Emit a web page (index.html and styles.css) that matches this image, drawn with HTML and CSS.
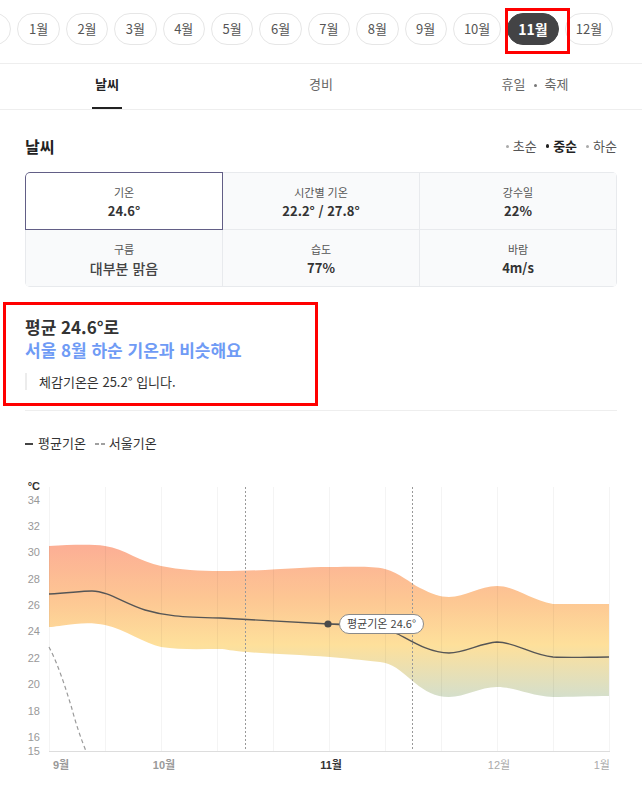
FILE: index.html
```html
<!DOCTYPE html>
<html lang="ko">
<head>
<meta charset="utf-8">
<title>날씨</title>
<link rel="stylesheet" href="styles.css">
</head>
<body>
<div class="months">
  <div class="months-track">
    <span class="pill">12월</span>
    <span class="pill">1월</span>
    <span class="pill">2월</span>
    <span class="pill">3월</span>
    <span class="pill">4월</span>
    <span class="pill">5월</span>
    <span class="pill">6월</span>
    <span class="pill">7월</span>
    <span class="pill">8월</span>
    <span class="pill">9월</span>
    <span class="pill">10월</span>
    <span class="pill active">11월</span>
    <span class="pill">12월</span>
  </div>
</div>

<nav class="tabs">
  <div class="tab"><span class="tab-label active">날씨</span></div>
  <div class="tab"><span class="tab-label">경비</span></div>
  <div class="tab"><span class="tab-label">휴일<i class="sep"></i>축제</span></div>
</nav>

<section class="weather">
  <div class="weather-head">
    <h2 class="title">날씨</h2>
    <div class="periods">
      <span class="period">초순</span>
      <span class="period on">중순</span>
      <span class="period">하순</span>
    </div>
  </div>

  <div class="stats">
    <div class="stat sel"><div class="label">기온</div><div class="value">24.6°</div></div>
    <div class="stat"><div class="label">시간별 기온</div><div class="value">22.2° / 27.8°</div></div>
    <div class="stat"><div class="label">강수일</div><div class="value">22%</div></div>
    <div class="stat"><div class="label">구름</div><div class="value text">대부분 맑음</div></div>
    <div class="stat"><div class="label">습도</div><div class="value">77%</div></div>
    <div class="stat"><div class="label">바람</div><div class="value">4m/s</div></div>
  </div>

  <div class="summary">
    <p class="sum-title">평균 24.6°로<br><span class="accent">서울 8월 하순 기온과 비슷해요</span></p>
    <p class="quote">체감기온은 25.2° 입니다.</p>
  </div>

  <div class="legend">
    <span class="lg-solid"></span>평균기온<span class="lg-dash"></span>서울기온
  </div>
</section>

<svg class="chart" width="642" height="324" viewBox="0 470 642 324" xmlns="http://www.w3.org/2000/svg">
  <defs>
    <linearGradient id="band" gradientUnits="userSpaceOnUse" x1="0" y1="545" x2="0" y2="700">
      <stop offset="0" stop-color="#fcae95"/>
      <stop offset="0.35" stop-color="#fdc693"/>
      <stop offset="0.65" stop-color="#fee09b"/>
      <stop offset="1" stop-color="#d3dfcd"/>
    </linearGradient>
  </defs>

  <path fill="url(#band)" d="M49,547 C70,546 90,545 105,547 C125,550 140,563 161,567 C180,571 200,572 220,572 C270,572 300,568 330,568 C355,568 372,567 385,570 C400,574 410,584 420,589 C432,595 440,598 449,598 C465,598 480,587 497,587 C515,587 530,601 553,605 L609,605 L609,697 C590,697 570,698 553,698 C530,697 515,688 497,688 C480,688 465,698 449,698 C435,698 425,692 415,684 C400,671 392,664 380,663 C360,661 345,659 330,658 C300,656 260,654 245,653 C232,652 226,650 220,650 C200,650 180,651 161,648 C145,645 125,630 105,626 C95,624 85,624 75,625 C62,626 55,628 49,628 Z"/>

  <g class="grid">
    <line x1="49.5" y1="488" x2="49.5" y2="752"/>
    <line x1="105.5" y1="488" x2="105.5" y2="752"/>
    <line x1="161.5" y1="488" x2="161.5" y2="752"/>
    <line x1="217.5" y1="488" x2="217.5" y2="752"/>
    <line x1="273.5" y1="488" x2="273.5" y2="752"/>
    <line x1="329.5" y1="488" x2="329.5" y2="752"/>
    <line x1="385.5" y1="488" x2="385.5" y2="752"/>
    <line x1="441.5" y1="488" x2="441.5" y2="752"/>
    <line x1="497.5" y1="488" x2="497.5" y2="752"/>
    <line x1="553.5" y1="488" x2="553.5" y2="752"/>
    <line x1="609.5" y1="488" x2="609.5" y2="752"/>
  </g>
  <line class="baseline" x1="49" y1="752.5" x2="610" y2="752.5"/>
  <line class="marker" x1="245.5" y1="488" x2="245.5" y2="752"/>
  <line class="marker" x1="412.5" y1="488" x2="412.5" y2="752"/>

  <path class="mean" d="M49,595 C70,594 80,592 92,592 C108,592 125,605 145,611 C165,617 180,618 220,619 L329,625 C355,626.5 383,628 398,635 C413,643 430,654 449,654 C465,654 480,644 497,643 C515,643 532,656 553,658 C570,659 590,658 609,658"/>
  <path class="seoul" d="M49,648 C58,665 66,690 72,710 C76,725 81,740 86,752"/>

  <line class="connector" x1="328" y1="625" x2="340" y2="625"/>
  <circle class="dot" cx="328" cy="625" r="3.6"/>
  <rect class="tip" x="339.5" y="615.5" width="84" height="19" rx="9.5" ry="9.5"/>
  <text class="tip-text" x="381.5" y="628.5" text-anchor="middle">평균기온 24.6°</text>

  <text class="unit" x="40" y="491" text-anchor="end">°C</text>
  <g class="ylab">
    <text x="40" y="505" text-anchor="end">34</text>
    <text x="40" y="531" text-anchor="end">32</text>
    <text x="40" y="557" text-anchor="end">30</text>
    <text x="40" y="584" text-anchor="end">28</text>
    <text x="40" y="610" text-anchor="end">26</text>
    <text x="40" y="636" text-anchor="end">24</text>
    <text x="40" y="663" text-anchor="end">22</text>
    <text x="40" y="689" text-anchor="end">20</text>
    <text x="40" y="716" text-anchor="end">18</text>
    <text x="40" y="742" text-anchor="end">16</text>
    <text x="40" y="756" text-anchor="end">15</text>
  </g>
  <g class="xlab">
    <text class="past" x="53" y="770">9월</text>
    <text class="past" x="164" y="770" text-anchor="middle">10월</text>
    <text class="cur" x="331" y="770" text-anchor="middle">11월</text>
    <text x="499" y="770" text-anchor="middle">12월</text>
    <text x="610" y="770" text-anchor="end">1월</text>
  </g>
</svg>

<div class="annot annot-month"></div>
<div class="annot annot-summary"></div>
</body>
</html>
```

FILE: styles.css
```css
* {
  box-sizing: border-box;
  margin: 0;
  padding: 0;
}

html, body {
  background: #fff;
}

body {
  width: 642px;
  font-family: "Noto Sans CJK KR", "Noto Sans", sans-serif;
  color: #333;
  overflow: hidden;
}

/* month selector */
.months {
  padding: 13px 0 18px;
  border-bottom: 1px solid #eee;
  overflow: hidden;
}

.months-track {
  display: flex;
  gap: 6px;
  margin-left: -37px;
  white-space: nowrap;
}

.pill {
  flex: none;
  min-width: 42.4px;
  height: 32px;
  padding: 0 10px;
  border: 1px solid #e6e6e6;
  border-radius: 16px;
  font-size: 13px;
  line-height: 30px;
  color: #555;
  text-align: center;
}

.pill.active {
  background: #434345;
  border-color: #434345;
  color: #fff;
  font-weight: 700;
  font-size: 14px;
}

/* tabs */
.tabs {
  display: grid;
  grid-template-columns: repeat(3, 1fr);
  border-bottom: 1px solid #eee;
}

.tab {
  display: flex;
  justify-content: center;
}

.tab-label {
  display: block;
  height: 45px;
  padding: 10px 3px 0;
  line-height: 20px;
  font-size: 13px;
  color: #666;
  border-bottom: 2px solid transparent;
}

.tab-label.active {
  color: #222;
  font-weight: 700;
  border-bottom-color: #222;
}

.sep {
  display: inline-block;
  width: 3px;
  height: 3px;
  margin: 0 8px;
  border-radius: 50%;
  background: #777;
  vertical-align: middle;
}

/* weather section */
.weather {
  padding: 25px 25px 0;
}

.weather-head {
  display: flex;
  justify-content: space-between;
  align-items: center;
  height: 22px;
}

.title {
  font-size: 16px;
  line-height: 22px;
  font-weight: 700;
  color: #222;
}

.periods {
  display: flex;
  gap: 9px;
  font-size: 13px;
  line-height: 22px;
  color: #555;
}

.period {
  display: flex;
  align-items: center;
}

.period::before {
  content: "";
  width: 3px;
  height: 3px;
  margin-right: 4px;
  border-radius: 50%;
  background: #aaa;
}

.period.on {
  color: #222;
  font-weight: 700;
}

.period.on::before {
  width: 3.5px;
  height: 3.5px;
  background: #222;
}

/* stats grid */
.stats {
  margin-top: 15px;
  display: grid;
  grid-template-columns: repeat(3, 1fr);
  grid-auto-rows: 56px;
  gap: 1px;
  padding: 1px;
  background: #e8eaed;
  border-radius: 5px;
  overflow: hidden;
}

.stat {
  background: #f9fafb;
  padding-top: 11px;
  text-align: center;
}

.stat.sel {
  background: #fff;
  box-shadow: 0 0 0 1px #625e86;
  border-top-left-radius: 4px;
}

.label {
  font-size: 11px;
  line-height: 16px;
  color: #555;
}

.value {
  margin-top: 2px;
  font-size: 13px;
  line-height: 18px;
  font-weight: 700;
  color: #333;
}

.value.text {
  font-size: 14px;
  font-weight: 500;
  color: #444;
}

/* summary */
.summary {
  margin-top: 28px;
  padding-bottom: 20px;
  border-bottom: 1px solid #eee;
}

.sum-title {
  font-size: 17px;
  line-height: 23px;
  font-weight: 700;
  color: #333;
}

.accent {
  color: #6f9bf5;
}

.quote {
  margin-top: 12px;
  padding-left: 12px;
  border-left: 2px solid #ececec;
  font-size: 13px;
  line-height: 17px;
  color: #333;
}

/* legend */
.legend {
  margin-top: 23px;
  font-size: 13px;
  line-height: 18px;
  color: #333;
}

.lg-solid {
  display: inline-block;
  width: 8px;
  height: 2px;
  margin-right: 5px;
  background: #444;
  vertical-align: middle;
}

.lg-dash {
  display: inline-block;
  width: 10px;
  height: 2px;
  margin: 0 4px 0 9px;
  background: repeating-linear-gradient(90deg, #a0a0a0 0 4px, transparent 4px 6px);
  vertical-align: middle;
}

/* chart */
.chart {
  display: block;
  margin-top: 17px;
}

.grid line {
  stroke: rgba(0, 0, 0, 0.045);
  stroke-width: 1;
}

.baseline {
  stroke: #ddd;
  stroke-width: 1;
}

.marker {
  stroke: #999;
  stroke-width: 1;
  stroke-dasharray: 2 2;
}

.mean {
  fill: none;
  stroke: #555;
  stroke-width: 1.4;
}

.seoul {
  fill: none;
  stroke: #9a9a9a;
  stroke-width: 1.2;
  stroke-dasharray: 4 3;
}

.connector {
  stroke: #555;
  stroke-width: 1.2;
}

.dot {
  fill: #4a4a4a;
}

.tip {
  fill: #fff;
  stroke: #8a8a8a;
  stroke-width: 1;
}

.tip-text {
  font-family: "Noto Sans CJK KR", sans-serif;
  font-size: 11px;
  fill: #444;
}

.unit {
  font-family: "Liberation Sans", Arial, sans-serif;
  font-size: 11px;
  font-weight: 700;
  fill: #333;
}

.ylab text {
  font-family: "Liberation Sans", Arial, sans-serif;
  font-size: 11px;
  fill: #999;
}

.xlab text {
  font-family: "Liberation Sans", "Noto Sans CJK KR", sans-serif;
  font-size: 11px;
  fill: #aaa;
}

.xlab .past {
  fill: #999;
  font-weight: 700;
}

.xlab .cur {
  fill: #333;
  font-weight: 700;
}

/* annotation frames over the screenshot */
.annot {
  position: absolute;
  border: 3px solid #f00;
  pointer-events: none;
}

.annot-month {
  left: 505px;
  top: 8px;
  width: 65px;
  height: 46px;
}

.annot-summary {
  left: 3px;
  top: 302px;
  width: 315px;
  height: 104px;
}
```
